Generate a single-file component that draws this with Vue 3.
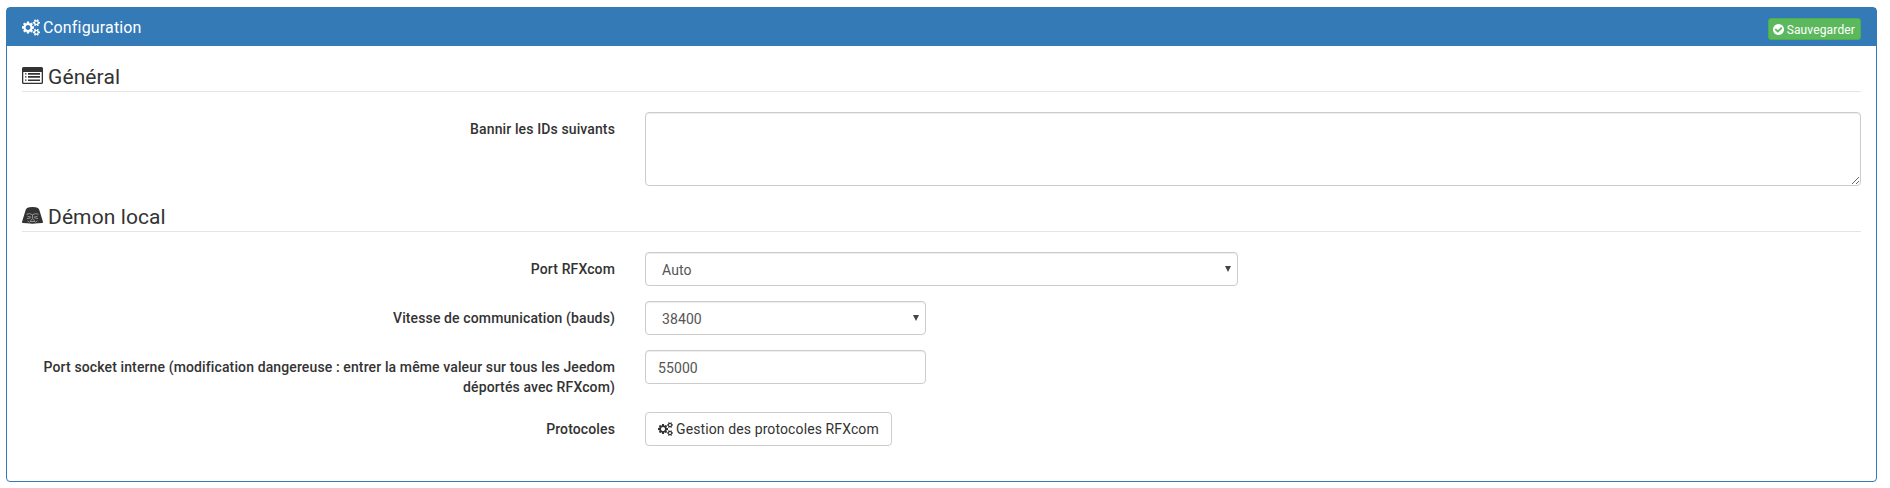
<script setup>
import { ref } from 'vue'

const banned = ref('')
const port = ref('auto')
const speed = ref('38400')
const socketPort = ref('55000')

const cogs =
  'M896 896q0-106-75-181t-181-75-181 75-75 181 75 181 181 75 181-75 75-181zm768 512q0-52-38-90t-90-38-90 38-38 90q0 53 37.5 90.5t90.5 37.5 90.5-37.5 37.5-90.5zm0-1024q0-52-38-90t-90-38-90 38-38 90q0 53 37.5 90.5t90.5 37.5 90.5-37.5 37.5-90.5zm-384 421v185q0 10-7 19.5t-16 10.5l-155 24q-11 35-32 76 34 48 90 115 7 11 7 20 0 12-7 19-23 30-82.5 89.5t-78.5 59.5q-11 0-21-7l-115-90q-37 19-77 31-11 108-23 155-7 24-30 24h-186q-11 0-20-7.5t-10-17.5l-23-153q-34-10-75-31l-118 89q-7 7-20 7-11 0-21-8-144-133-144-160 0-9 7-19 10-14 41-53t47-61q-23-44-35-82l-152-24q-10-1-17-9.5t-7-19.5v-185q0-10 7-19.5t16-10.5l155-24q11-35 32-76-34-48-90-115-7-11-7-20 0-12 7-20 22-30 82-89t79-59q11 0 21 7l115 90q34-18 77-32 11-108 23-154 7-24 30-24h186q11 0 20 7.5t10 17.5l23 153q34 10 75 31l118-89q8-7 20-7 11 0 21 8 144 133 144 160 0 8-7 19-12 16-42 54t-45 60q23 48 34 82l152 23q10 2 17 10.5t7 19.5zm640 533v140q0 16-149 31-12 27-30 52 51 113 51 138 0 4-4 7-122 71-124 71-8 0-46-47t-52-68q-20 2-30 2t-30-2q-14 21-52 68t-46 47q-2 0-124-71-4-3-4-7 0-25 51-138-18-25-30-52-149-15-149-31v-140q0-16 149-31 13-29 30-52-51-113-51-138 0-4 4-7 4-2 35-20t59-34 30-16q8 0 46 46.5t52 67.5q20-2 30-2t30 2q51-71 92-112l6-2q4 0 124 70 4 3 4 7 0 25-51 138 17 23 30 52 149 15 149 31zm0-1024v140q0 16-149 31-12 27-30 52 51 113 51 138 0 4-4 7-122 71-124 71-8 0-46-47t-52-68q-20 2-30 2t-30-2q-14 21-52 68t-46 47q-2 0-124-71-4-3-4-7 0-25 51-138-18-25-30-52-149-15-149-31v-140q0-16 149-31 13-29 30-52-51-113-51-138 0-4 4-7 4-2 35-20t59-34 30-16q8 0 46 46.5t52 67.5q20-2 30-2t30 2q51-71 92-112l6-2q4 0 124 70 4 3 4 7 0 25-51 138 17 23 30 52 149 15 149 31z'
const check =
  'M1412 734q0-28-18-46l-91-90q-19-19-45-19t-45 19l-408 407-226-226q-19-19-45-19t-45 19l-91 90q-18 18-18 46 0 27 18 45l362 362q19 19 45 19 27 0 46-19l543-543q18-18 18-45zm252 162q0 209-103 385.5t-279.5 279.5-385.5 103-385.5-103-279.5-279.5-103-385.5 103-385.5 279.5-279.5 385.5-103 385.5 103 279.5 279.5 103 385.5z'
</script>

<template>
  <section class="panel">
    <header class="heading">
      <h3 class="title">
        <svg class="cogs" viewBox="0 0 1920 1792"><path :d="cogs" /></svg>
        <span>Configuration</span>
      </h3>
      <button class="save" type="button">
        <svg class="check" viewBox="128 128 1536 1536"><path :d="check" /></svg>
        <span>Sauvegarder</span>
      </button>
    </header>

    <form class="body" @submit.prevent>
      <h4 class="legend">
        <svg class="glyph" viewBox="0 0 21 17">
          <path
            fill-rule="evenodd"
            d="M1.500 0h18A1.500 1.500 0 0 1 21 1.500v14a1.500 1.500 0 0 1-1.500 1.500h-18A1.500 1.500 0 0 1 0 15.500V1.500A1.500 1.500 0 0 1 1.500 0zM1.300 5v10.200q0 .6.6.6h17.200q.6 0 .6-.6V5z"
          />
          <path d="M3 6.200h1.500v1.300H3zM3 9.200h1.500v1.300H3zM3 12.500h1.500v1.300H3zM6 6.100h12v1.600H6zM6 9.100h12v1.600H6zM6 12.400h12v1.600H6z" />
        </svg>
        <span>Général</span>
      </h4>
      <div class="row">
        <label class="label" for="banned">Bannir les IDs suivants</label>
        <div class="field wide"><textarea id="banned" v-model="banned" class="control area"></textarea></div>
      </div>

      <h4 class="legend">
        <svg class="glyph" viewBox="0 0 21 17">
          <path d="M5 1Q7 0 10.500 0T16 1q1.300 1 1.800 3.500L21 15q.1.800-.7 1L16 16.300q-5.500.9-11 0L.7 16q-.8-.2-.7-1L3.200 4.500Q3.700 2 5 1z" />
          <path
            class="mask"
            d="M4.500 7.200q3-1.400 6 .5 3-1.900 6-.5M5.500 9.300l3.700.9M15.500 9.300l-3.700.9M10.500 8v3M5 11.500l3.500-.5M16 11.500l-3.500-.5M8 14.500l2.500-3 2.500 3zM5.500 13.700l2 1.800M15.500 13.700l-2 1.800"
          />
        </svg>
        <span>Démon local</span>
      </h4>
      <div class="row">
        <label class="label" for="port">Port RFXcom</label>
        <div class="field medium">
          <select id="port" v-model="port" class="control select"><option value="auto">Auto</option></select>
          <svg class="arrow" viewBox="0 0 6 6"><path d="M0 0h6L3 6z" /></svg>
        </div>
      </div>
      <div class="row">
        <label class="label" for="speed">Vitesse de communication (bauds)</label>
        <div class="field small">
          <select id="speed" v-model="speed" class="control select"><option value="38400">38400</option></select>
          <svg class="arrow" viewBox="0 0 6 6"><path d="M0 0h6L3 6z" /></svg>
        </div>
      </div>
      <div class="row">
        <label class="label" for="socket">Port socket interne (modification dangereuse : entrer la même valeur sur tous les Jeedom déportés avec RFXcom)</label>
        <div class="field small"><input id="socket" v-model="socketPort" class="control" /></div>
      </div>
      <div class="row">
        <span class="label">Protocoles</span>
        <div class="field medium">
          <button class="protocols" type="button">
            <svg class="cogs" viewBox="0 0 1920 1792"><path :d="cogs" /></svg>
            <span>Gestion des protocoles RFXcom</span>
          </button>
        </div>
      </div>
    </form>
  </section>
</template>

<style>
body {
  background: #fff;
}
</style>

<style scoped>
* {
  box-sizing: border-box;
}
.panel {
  width: 1871px;
  height: 475px;
  margin: 7px 0 0 6px;
  border: 1px solid #337ab7;
  border-radius: 4px;
  background: #fff;
  color: #333;
  font: 14px/20px Roboto, "Liberation Sans", sans-serif;
  letter-spacing: 0.1px;
}
svg {
  fill: currentColor;
  flex: none;
}
.heading {
  display: flex;
  justify-content: space-between;
  height: 38px;
  padding: 10px 15px 0;
  background: #337ab7;
  color: #fff;
}
.title {
  display: flex;
  gap: 3px;
  margin: 0;
  font-size: 16px;
  line-height: 20px;
  font-weight: 400;
  letter-spacing: 0.16px;
}
.title .cogs {
  width: 18px;
  height: 17px;
  margin-top: 1px;
}
.save {
  display: flex;
  align-items: center;
  gap: 3px;
  height: 22px;
  padding: 1px 5px 0 4px;
  border: 1px solid #4cae4c;
  border-radius: 3px;
  background: #5cb85c;
  color: #fff;
  font: 12px/18px Roboto, sans-serif;
  letter-spacing: 0.14px;
}
.check {
  width: 11px;
  height: 11px;
}
.body {
  padding: 15px;
}
.legend {
  display: flex;
  gap: 5px;
  height: 31px;
  margin: 0 0 20px;
  border-bottom: 1px solid #e5e5e5;
  font-size: 21px;
  line-height: 32px;
  font-weight: 400;
}
.glyph {
  width: 21px;
  height: 17px;
  margin-top: 6px;
}
.mask {
  fill: none;
  stroke: #bbb;
  stroke-width: 0.7;
}
.row {
  display: flex;
  margin: 0 -15px 15px;
}
.label {
  width: 33.3333%;
  padding: 7px 15px 0;
  font-weight: 500;
  letter-spacing: 0.12px;
  text-align: right;
}
.field {
  position: relative;
  padding: 0 15px;
}
.wide {
  width: 66.6667%;
}
.medium {
  width: 33.3333%;
}
.small {
  width: 16.6667%;
}
.control {
  display: block;
  width: 100%;
  height: 34px;
  margin: 0;
  padding: 7px 12px 5px;
  border: 1px solid #ccc;
  border-radius: 4px;
  outline: none;
  background: #fff;
  box-shadow: inset 0 1px 1px rgba(0, 0, 0, 0.075);
  color: #555;
  font: 14px/20px Roboto, sans-serif;
  letter-spacing: 0.1px;
}
.area {
  height: 74px;
  resize: vertical;
}
.select {
  appearance: none;
  padding-left: 16px;
}
.arrow {
  position: absolute;
  top: 14px;
  right: 22px;
  width: 6px;
  height: 6px;
  fill: #444;
  pointer-events: none;
}
.protocols {
  display: flex;
  align-items: center;
  gap: 3px;
  height: 34px;
  padding: 0 12px;
  border: 1px solid #ccc;
  border-radius: 4px;
  background: #fff;
  color: #333;
  font: 14px/20px Roboto, sans-serif;
  letter-spacing: 0.11px;
}
.protocols .cogs {
  width: 15px;
  height: 14px;
}
</style>
